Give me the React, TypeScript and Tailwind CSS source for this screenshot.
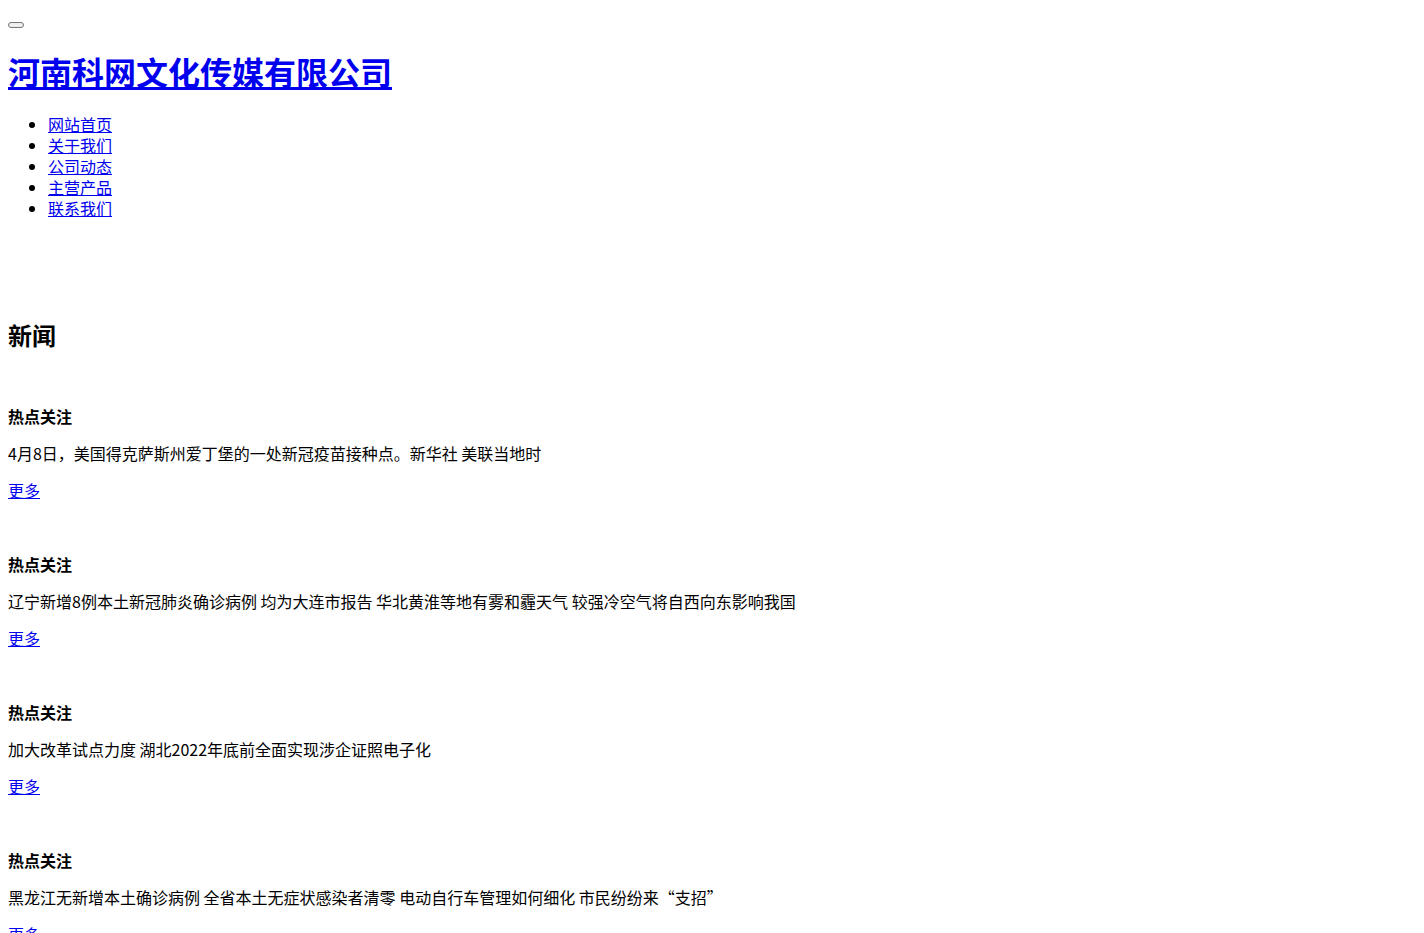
const navItems = ["网站首页", "关于我们", "公司动态", "主营产品", "联系我们"];

const news = [
  "4月8日，美国得克萨斯州爱丁堡的一处新冠疫苗接种点。新华社 美联当地时",
  "辽宁新增8例本土新冠肺炎确诊病例 均为大连市报告 华北黄淮等地有雾和霾天气 较强冷空气将自西向东影响我国",
  "加大改革试点力度 湖北2022年底前全面实现涉企证照电子化",
  "黑龙江无新增本土确诊病例 全省本土无症状感染者清零 电动自行车管理如何细化 市民纷纷来“支招”",
];

export default function App() {
  return (
    <div className="min-h-screen bg-white p-2 text-base text-black font-['Noto_Sans_CJK_SC','Noto_Sans',sans-serif]">
      <div className="h-[23px] pt-[14px]">
        <button className="block h-[6px] w-4 rounded-[3px] border border-[#767676] bg-[#efefef]" />
      </div>

      <h1 className="mt-[20px] mb-[23px] text-[32px] font-bold leading-[40px]">
        <a href="#" className="text-[#0000ee] underline">
          河南科网文化传媒有限公司
        </a>
      </h1>

      <ul className="list-disc pl-10 leading-[21px]">
        {navItems.map((item) => (
          <li key={item}>
            <a href="#" className="text-[#0000ee] underline">
              {item}
            </a>
          </li>
        ))}
      </ul>

      <h2 className="mt-[100px] text-2xl font-bold leading-8">新闻</h2>

      <div className="mt-[55px] flex flex-col gap-[53px]">
        {news.map((text, i) => (
          <div key={i} className="flex flex-col gap-4 leading-[21px]">
            <h4 className="font-bold">热点关注</h4>
            <p>{text}</p>
            <a href="#" className="self-start text-[#0000ee] underline">
              更多
            </a>
          </div>
        ))}
      </div>
    </div>
  );
}
